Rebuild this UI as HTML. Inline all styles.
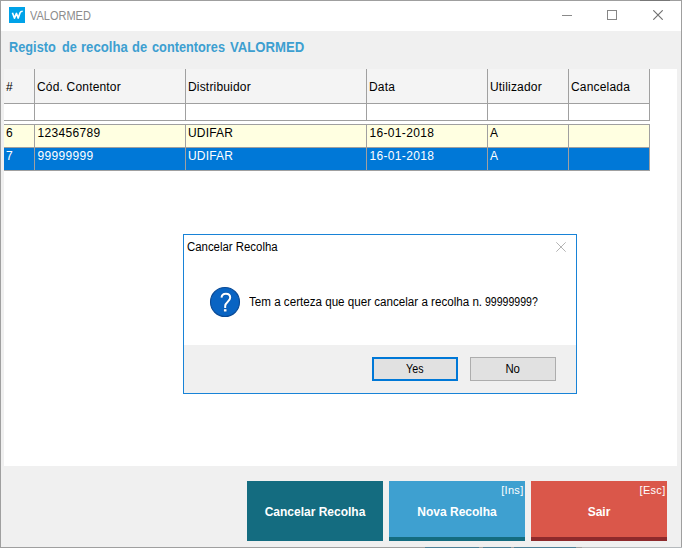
<!DOCTYPE html>
<html><head><meta charset="utf-8">
<style>
html,body{margin:0;padding:0;}
body{width:682px;height:548px;overflow:hidden;background:#f0f0f0;font-family:"Liberation Sans",sans-serif;font-size:12px;color:#000;position:relative;}
.abs{position:absolute;}
#win{position:absolute;left:0;top:0;width:682px;height:548px;box-sizing:border-box;border:1px solid #9f9f9f;}
#titlebar{position:absolute;left:1px;top:1px;width:680px;height:30px;background:#fff;}
#ttl{position:absolute;left:30px;top:9px;font-size:12px;line-height:14px;color:#8c8c8c;transform:scaleX(0.915);transform-origin:left center;white-space:nowrap;}
.hw{position:absolute;top:39.5px;transform-origin:left bottom;font-size:13.33px;font-weight:bold;color:#3d9fd0;line-height:16px;white-space:nowrap;}
#panel{position:absolute;left:4px;top:69px;width:673px;height:397px;background:#fff;}
.hdr{position:absolute;top:69px;height:34px;background:#f4f4f4;}
.vl{position:absolute;width:1px;background:#a0a0a0;}
.hl{position:absolute;height:1px;background:#a0a0a0;}
.t{position:absolute;white-space:nowrap;line-height:14px;font-size:12px;letter-spacing:0.18px;}
.n{letter-spacing:0.33px;}
.seg{letter-spacing:0;transform:scaleX(0.95);transform-origin:left center;}
.btn{position:absolute;top:481px;height:60px;color:#fff;font-weight:bold;font-size:12px;text-align:center;line-height:62px;}
</style></head><body>
<div id="win"></div>
<div id="titlebar"></div>
<svg class="abs" style="left:9px;top:7px" width="16" height="16" viewBox="0 0 16 16"><rect width="16" height="16" fill="#00a2e8"/><path d="M3.4 5.7 L5.5 11.1 L7.4 6.4 L9.25 11.1 L11.15 5.5 Q11.7 4.3 13.7 4.2" fill="none" stroke="#fff" stroke-width="1.6" stroke-linejoin="round"/></svg>
<div id="ttl">VALORMED</div>
<!-- window controls -->
<div class="abs" style="left:562px;top:15px;width:10px;height:1px;background:#8a8a8a"></div>
<div class="abs" style="left:607px;top:10px;width:8px;height:8px;border:1px solid #868686"></div>
<svg class="abs" style="left:653px;top:10px" width="10" height="10" viewBox="0 0 10 10"><path d="M0.3 0.3 L9.7 9.7 M9.7 0.3 L0.3 9.7" stroke="#707070" stroke-width="1.15" fill="none"/></svg>

<div class="hw" style="left:9.04px;transform:scale(0.957,1.05)">Registo</div><div class="hw" style="left:62.0px;transform:scale(0.95,1.05)">de</div><div class="hw" style="left:81.3px;transform:scale(0.985,1.05)">recolha</div><div class="hw" style="left:131.7px;transform:scale(0.97,1.05)">de</div><div class="hw" style="left:152.4px;transform:scale(0.957,1.05)">contentores</div><div class="hw" style="left:230.0px;transform:scale(0.988,1.05)">VALORMED</div>
<div id="panel"></div>
<!-- header bg -->
<div class="hdr" style="left:4px;width:646px"></div>
<!-- rows -->
<div class="abs" style="left:4px;top:125px;width:646px;height:22px;background:#ffffe1"></div>
<div class="abs" style="left:4px;top:148px;width:646px;height:22px;background:#0078d7"></div>
<!-- horizontal lines -->
<div class="hl" style="left:4px;top:103px;width:646px"></div>
<div class="hl" style="left:4px;top:120px;width:646px"></div>
<div class="hl" style="left:4px;top:124px;width:646px"></div>
<div class="hl" style="left:4px;top:147px;width:646px"></div>
<div class="hl" style="left:4px;top:170px;width:646px"></div>
<!-- vertical lines -->
<div class="vl" style="left:34px;top:69px;height:52px"></div>
<div class="vl" style="left:185px;top:69px;height:52px"></div>
<div class="vl" style="left:366px;top:69px;height:52px"></div>
<div class="vl" style="left:487px;top:69px;height:52px"></div>
<div class="vl" style="left:568px;top:69px;height:52px"></div>
<div class="vl" style="left:649px;top:69px;height:52px"></div>
<div class="vl" style="left:34px;top:124px;height:47px"></div>
<div class="vl" style="left:185px;top:124px;height:47px"></div>
<div class="vl" style="left:366px;top:124px;height:47px"></div>
<div class="vl" style="left:487px;top:124px;height:47px"></div>
<div class="vl" style="left:568px;top:124px;height:47px"></div>
<div class="vl" style="left:649px;top:124px;height:47px"></div>
<!-- header text -->
<div class="t" style="left:6px;top:80px">#</div>
<div class="t" style="left:37px;top:80px">Cód. Contentor</div>
<div class="t" style="left:188px;top:80px">Distribuidor</div>
<div class="t" style="left:369px;top:80px">Data</div>
<div class="t" style="left:490px;top:80px">Utilizador</div>
<div class="t" style="left:571px;top:80px">Cancelada</div>
<!-- row 1 -->
<div class="t" style="left:6px;top:126px">6</div>
<div class="t n" style="left:37.5px;top:126px">123456789</div>
<div class="t" style="left:188px;top:126px">UDIFAR</div>
<div class="t n" style="left:369.5px;top:126px">16-01-2018</div>
<div class="t" style="left:490px;top:126px">A</div>
<!-- row 2 -->
<div class="t" style="left:6px;top:149px;color:#fff">7</div>
<div class="t n" style="left:37.5px;top:149px;color:#fff">99999999</div>
<div class="t" style="left:188px;top:149px;color:#fff">UDIFAR</div>
<div class="t n" style="left:369.5px;top:149px;color:#fff">16-01-2018</div>
<div class="t" style="left:490px;top:149px;color:#fff">A</div>

<!-- dialog -->
<div class="abs" style="left:183px;top:234px;width:394px;height:160px;box-sizing:border-box;border:1px solid #1883d7;background:#fff"></div>
<div class="abs" style="left:184px;top:345px;width:392px;height:48px;background:#f0f0f0"></div>
<div class="t seg" style="left:187.2px;top:240px">Cancelar Recolha</div>
<svg class="abs" style="left:556px;top:242px" width="10" height="10" viewBox="0 0 10 10"><path d="M0.3 0.3 L9.7 9.7 M9.7 0.3 L0.3 9.7" stroke="#b4b4b4" stroke-width="1" fill="none"/></svg>
<svg class="abs" style="left:209px;top:286px" width="32" height="32" viewBox="0 0 32 32"><circle cx="16" cy="16" r="14.5" fill="#0964c3" stroke="#0a4a96" stroke-width="1.1"/><g fill="none" stroke="#0a4f9e" stroke-width="3.1" opacity="0.6"><path d="M12.5 11.6 C12.7 8.8 14.7 7.7 16.9 7.7 C19.4 7.7 21.2 9.3 21.2 11.6 C21.2 15.4 16.2 16.0 16.2 20 L16.2 22"/></g><rect x="14.3" y="22.6" width="3.8" height="3.5" fill="#0a4f9e" opacity="0.6"/><path d="M12.5 11.6 C12.7 8.8 14.7 7.7 16.9 7.7 C19.4 7.7 21.2 9.3 21.2 11.6 C21.2 15.4 16.2 16.0 16.2 20 L16.2 22" fill="none" stroke="#fff" stroke-width="2"/><rect x="14.9" y="23.2" width="2.6" height="2.3" fill="#fff"/></svg>
<div class="t seg" style="left:249.0px;top:295px;transform:scaleX(0.968)">Tem a certeza que quer cancelar a recolha n.</div>
<div class="t seg" style="left:485.3px;top:295px;transform:scaleX(0.88)">99999999?</div>
<div class="abs" style="left:372px;top:357px;width:86px;height:24px;box-sizing:border-box;border:2px solid #0078d7;background:#e1e1e1;text-align:center;line-height:20px"><span style="display:inline-block;transform:scaleX(0.89)">Yes</span></div>
<div class="abs" style="left:470px;top:357px;width:86px;height:24px;box-sizing:border-box;border:1px solid #adadad;background:#e1e1e1;text-align:center;line-height:22px"><span style="display:inline-block;transform:scaleX(0.95)">No</span></div>

<!-- bottom buttons -->
<div class="btn" style="left:247px;width:136px;background:#146c80">Cancelar Recolha</div>
<div class="btn" style="left:389px;width:136px;background:#3ea0d0">Nova Recolha</div>
<div class="abs" style="left:389px;top:537px;width:136px;height:4px;background:#146c80"></div>
<div class="btn" style="left:531px;width:136px;background:#da574a">Sair</div>
<div class="abs" style="left:531px;top:537px;width:136px;height:4px;background:#8e2a2c"></div>
<div class="t" style="left:389px;top:483px;width:134.5px;text-align:right;color:#fff;font-size:11px;letter-spacing:0.3px">[Ins]</div>
<div class="t" style="left:531px;top:483px;width:134.5px;text-align:right;color:#fff;font-size:11px;letter-spacing:0.3px">[Esc]</div>
<!-- edge artifacts -->
<div class="abs" style="left:640px;top:0;width:30px;height:1px;background:#777"></div>
<div class="abs" style="left:425px;top:547px;width:54px;height:1px;background:#4d8097"></div>
<div class="abs" style="left:483px;top:547px;width:28px;height:1px;background:#4d8097"></div>
<div class="abs" style="left:514px;top:547px;width:62px;height:1px;background:#4d8097"></div>
<div class="abs" style="left:582px;top:547px;width:100px;height:1px;background:#b5b9bc"></div>
</body></html>
